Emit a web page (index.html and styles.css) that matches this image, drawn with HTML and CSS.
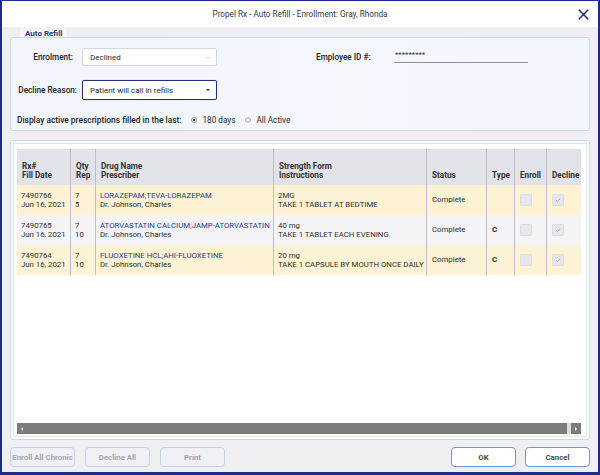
FILE: index.html
```html
<!DOCTYPE html>
<html>
<head>
<meta charset="utf-8">
<link rel="stylesheet" href="styles.css">
</head>
<body>
<div class="win">
  <div class="titlebar">
    <span class="title">Propel Rx - Auto Refill - Enrollment: Gray, Rhonda</span>
    <svg class="close" viewBox="0 0 11 11"><path d="M0.8 0.8 L10.2 10.2 M10.2 0.8 L0.8 10.2" stroke="#1f2b72" stroke-width="1.5" fill="none"/></svg>
  </div>
  <div class="content">
    <div class="legend">Auto Refill</div>
    <div class="group">
      <div class="row r1">
        <span class="lbl l1">Enrolment:</span>
        <div class="select"><span>Declined</span><span class="arrow light"></span></div>
        <span class="lbl emp">Employee ID #:</span>
        <div class="input">*********</div>
      </div>
      <div class="row r2">
        <span class="lbl l2">Decline Reason:</span>
        <div class="select focus"><span>Patient will call in refills</span><span class="arrow"></span></div>
      </div>
      <div class="row r3">
        <span class="lbl lbl-wide">Display active prescriptions filled in the last:</span>
        <span class="radio on"></span><span class="opt">180 days</span>
        <span class="radio r-second"></span><span class="opt">All Active</span>
      </div>
    </div>
    <div class="panel">
      <div class="inner">
        <table class="grid">
          <thead>
            <tr>
              <th class="c-rx">Rx#<br>Fill Date</th>
              <th class="c-qty">Qty<br>Rep</th>
              <th class="c-drug">Drug Name<br>Prescriber</th>
              <th class="c-str">Strength Form<br>Instructions</th>
              <th class="c-st">Status</th>
              <th class="c-ty">Type</th>
              <th class="c-en">Enroll</th>
              <th class="c-de">Decline</th>
            </tr>
          </thead>
          <tbody>
            <tr class="odd">
              <td>7490766<br>Jun 16, 2021</td>
              <td>7<br>5</td>
              <td><span class="drug">LORAZEPAM;TEVA-LORAZEPAM</span><br>Dr. Johnson, Charles</td>
              <td>2MG<br>TAKE 1 TABLET AT BEDTIME</td>
              <td>Complete</td>
              <td class="ty"></td>
              <td><span class="cb"></span></td>
              <td><span class="cb"><svg viewBox="0 0 12 12"><path d="M3.6 6.4 L5.3 7.9 L8.5 4.6" stroke="#9b9b9f" stroke-width="1" fill="none"/></svg></span></td>
            </tr>
            <tr class="even">
              <td>7490765<br>Jun 16, 2021</td>
              <td>7<br>10</td>
              <td><span class="drug">ATORVASTATIN CALCIUM;JAMP-ATORVASTATIN</span><br>Dr. Johnson, Charles</td>
              <td>40 mg<br>TAKE 1 TABLET EACH EVENING</td>
              <td>Complete</td>
              <td class="ty">C</td>
              <td><span class="cb"></span></td>
              <td><span class="cb"><svg viewBox="0 0 12 12"><path d="M3.6 6.4 L5.3 7.9 L8.5 4.6" stroke="#9b9b9f" stroke-width="1" fill="none"/></svg></span></td>
            </tr>
            <tr class="odd">
              <td>7490764<br>Jun 16, 2021</td>
              <td>7<br>10</td>
              <td><span class="drug">FLUOXETINE HCL;AHI-FLUOXETINE</span><br>Dr. Johnson, Charles</td>
              <td>20 mg<br>TAKE 1 CAPSULE BY MOUTH ONCE DAILY</td>
              <td>Complete</td>
              <td class="ty">C</td>
              <td><span class="cb"></span></td>
              <td><span class="cb"><svg viewBox="0 0 12 12"><path d="M3.6 6.4 L5.3 7.9 L8.5 4.6" stroke="#9b9b9f" stroke-width="1" fill="none"/></svg></span></td>
            </tr>
          </tbody>
        </table>
        <div class="spacer"></div>
        <div class="hscroll">
          <span class="sb-btn"><span class="tri-l"></span></span>
          <span class="sb-thumb"></span>
          <span class="sb-gap"></span>
          <span class="sb-btn"><span class="tri-r"></span></span>
        </div>
      </div>
    </div>
    <div class="buttons">
      <div class="btn-group">
        <button class="btn dis">Enroll All Chronic</button>
        <button class="btn dis">Decline All</button>
        <button class="btn dis">Print</button>
      </div>
      <div class="btn-group right">
        <button class="btn pri">OK</button>
        <button class="btn pri">Cancel</button>
      </div>
    </div>
  </div>
</div>
</body>
</html>
```

FILE: styles.css
```css
* { box-sizing: border-box; margin: 0; padding: 0; }
body { margin: 0; font-family: Roboto, "Liberation Sans", sans-serif; font-size: 7.8px; color: #333; }

.win {
  width: 600px; height: 475px;
  border: 2px solid #1d2b8a; border-top-width: 1px; border-bottom-width: 3px;
  background: #eeeef3;
  display: flex; flex-direction: column;
}
.titlebar {
  height: 26px; background: #fff;
  display: grid; grid-template-columns: 1fr auto 1fr; align-items: center;
}
.title { grid-column: 2; color: #3a3a3a; font-size: 8.2px; }
.close { grid-column: 3; justify-self: end; margin-right: 9px; width: 11px; height: 11px; }

.content { flex: 1; padding: 0 8px 5px; display: flex; flex-direction: column; }

.legend {
  align-self: flex-start; margin-left: 10px; padding: 0 5px;
  height: 10px; line-height: 14px; font-size: 8px;
  font-weight: 700; color: #27358c;
  background: #f6f7fa; border-radius: 3px 3px 0 0;
}
.group {
  height: 94px;
  border: 1px solid #c8d7ee; border-radius: 3px;
  background: linear-gradient(90deg, #f2f5fb 0%, #f4f7fc 60%, #f2f5fb 100%);
  padding: 10px 6px 5px;
  display: flex; flex-direction: column;
}
.row { display: flex; align-items: center; }
.r1 { height: 18px; }
.r2 { height: 20px; margin-top: 14px; }
.r3 { height: 10px; margin-top: 15px; line-height: 10px; }
.lbl { font-weight: 500; color: #222; font-size: 8.2px; white-space: nowrap; }
.lbl-wide { font-size: 8.4px; }
.l1, .l2 { width: 65px; flex: none; display: flex; justify-content: flex-end; }
.l1 { padding-right: 9px; }
.l2 { padding-right: 5px; }
.select {
  width: 135px; height: 18px; flex: none;
  background: #fff; border: 1px solid #d3d6de; border-radius: 2px;
  display: flex; align-items: center; justify-content: space-between;
  padding: 0 6px 0 7px; color: #2a2a2a; font-size: 8px;
}
.select.focus { height: 20px; border-color: #26317a; box-shadow: 0 0 1px rgba(38,49,122,0.5); }
.arrow { width: 0; height: 0; border-left: 2.5px solid transparent; border-right: 2.5px solid transparent; border-top: 2.5px solid #1f2757; }
.arrow.light { border-top-color: #b0b4c0; border-top-width: 1.5px; }
.emp { margin-left: 99px; width: 78px; flex: none; }
.input {
  width: 134px; height: 15px; align-self: flex-start; flex: none;
  border-bottom: 1px solid #8e8e92; line-height: 13px; color: #333; padding-left: 1px;
}
.radio {
  width: 6px; height: 6px; border-radius: 50%;
  border: 1px solid #a4a4aa; background: #fff; margin-left: 10px; margin-right: 5px;
  display: inline-flex; align-items: center; justify-content: center; flex: none;
}
.radio.on::after { content: ""; width: 2px; height: 2px; border-radius: 50%; background: #333; }
.radio.r-second { margin-left: 10px; }
.opt { color: #2a2a2a; font-size: 8.2px; }

.panel {
  margin-top: 9px; height: 300px;
  border: 1px solid #c9d7ef; border-radius: 3px; background: #fff;
  padding: 2px; display: flex;
}
.inner {
  flex: 1; border: 1px solid #e3e5ec;
  padding: 5px 3px 2px 3px;
  display: flex; flex-direction: column;
}
.grid { border-collapse: separate; border-spacing: 0; table-layout: fixed; width: 564px; }
.grid th {
  height: 36px; vertical-align: bottom; text-align: left;
  padding: 0 5px 5px; line-height: 9px; font-size: 8.2px;
  background: #e2e2e9; font-weight: 700; color: #333; white-space: nowrap;
}
.grid td {
  height: 30px; vertical-align: middle; padding: 0 4px;
  line-height: 9.5px; color: #2e2e2e; white-space: nowrap;
}
.grid th + th, .grid td + td { border-left: 1px solid #bcbccf; }
.grid td:nth-child(n+5) { padding-left: 5px; }
.c-rx { width: 53px; } .c-qty { width: 25px; } .c-drug { width: 178px; } .c-str { width: 153px; }
.c-st { width: 60px; } .c-ty { width: 28px; } .c-en { width: 32px; } .c-de { width: 35px; }
.odd td { background: #fdf2d4; }
.even td { background: #f4f4f7; }
.drug { color: #2b3a8f; }
.ty { font-weight: 700; }
.cb {
  display: block; width: 12px; height: 12px;
  background: #e7e7eb; border: 1px solid #dcdce2; border-radius: 1.5px;
}
.cb svg { display: block; width: 10px; height: 10px; }

.spacer { flex: 1; }
.hscroll { height: 11px; display: flex; width: 564px; }
.sb-btn { width: 10px; height: 11px; background: #7c7c7c; display: flex; align-items: center; justify-content: center; }
.sb-thumb { flex: 1; background: #7c7c7c; }
.sb-gap { width: 4px; background: #dcdcdc; }
.tri-l { width: 0; height: 0; border-top: 2px solid transparent; border-bottom: 2px solid transparent; border-right: 2px solid #fff; }
.tri-r { width: 0; height: 0; border-top: 2px solid transparent; border-bottom: 2px solid transparent; border-left: 2px solid #fff; }

.buttons { margin-top: 7px; height: 20px; display: flex; justify-content: space-between; }
.btn-group { display: flex; gap: 10px; }
.btn-group.right { gap: 9px; }
.btn {
  width: 65px; height: 20px; border-radius: 4px;
  font-family: Roboto, "Liberation Sans", sans-serif; font-size: 7.8px; font-weight: 700;
}
.btn.dis { background: #eef0f6; border: 1px solid #c6d2ea; color: #a6a6ae; }
.btn.pri { background: #fff; border: 1px solid #6f96d8; color: #4a4a4a; }
```
